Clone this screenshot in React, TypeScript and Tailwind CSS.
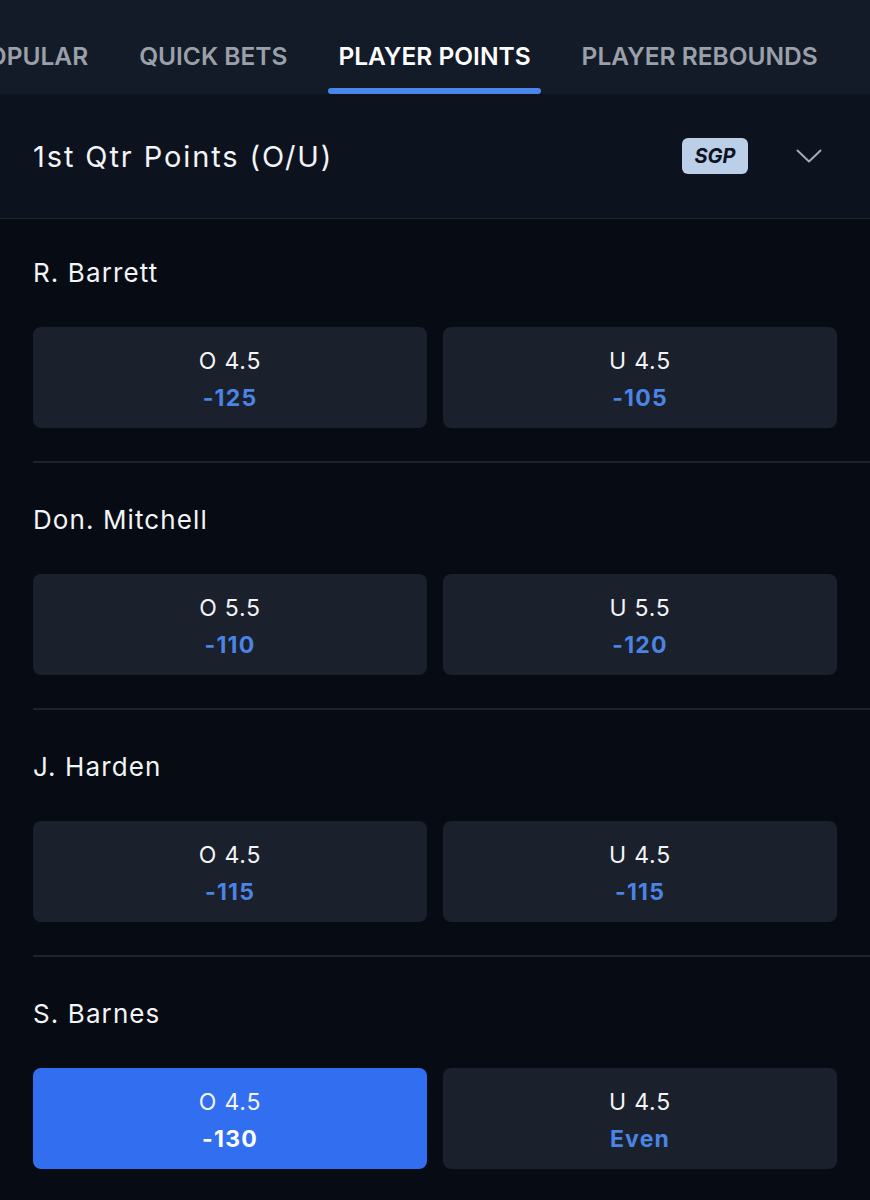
import React from "react";

type Sel = { label: string; odds: string; selected?: boolean };
type Player = { name: string; over: Sel; under: Sel };

const players: Player[] = [
  { name: "R. Barrett", over: { label: "O 4.5", odds: "-125" }, under: { label: "U 4.5", odds: "-105" } },
  { name: "Don. Mitchell", over: { label: "O 5.5", odds: "-110" }, under: { label: "U 5.5", odds: "-120" } },
  { name: "J. Harden", over: { label: "O 4.5", odds: "-115" }, under: { label: "U 4.5", odds: "-115" } },
  { name: "S. Barnes", over: { label: "O 4.5", odds: "-130", selected: true }, under: { label: "U 4.5", odds: "Even" } },
];

function OddsButton({ s }: { s: Sel }) {
  return (
    <div
      className={
        s.selected
          ? "flex h-[101px] flex-1 flex-col items-center justify-center rounded-[8px] bg-[#326ff0]"
          : "flex h-[101px] flex-1 flex-col items-center justify-center rounded-[8px] bg-[#1a202c]"
      }
    >
      <div className="pt-[4px] text-[23px] leading-[36px] tracking-[0.8px] text-[#f3f4f6]">{s.label}</div>
      <div
        className={
          s.selected
            ? "pt-[1px] text-[23px] font-bold leading-[36px] tracking-[1.2px] text-white"
            : "pt-[1px] text-[23px] font-bold leading-[36px] tracking-[1.2px] text-[#4a84e4]"
        }
      >
        {s.odds}
      </div>
    </div>
  );
}

export default function App() {
  const tabs = ["POPULAR", "QUICK BETS", "PLAYER POINTS", "PLAYER REBOUNDS"];
  return (
    <div className="min-h-[1200px] w-[870px] overflow-hidden bg-[#060b14]" style={{ fontFamily: "Inter, 'Noto Sans', sans-serif" }}>
      {/* Tabs */}
      <div className="h-[94px] overflow-hidden bg-[#141b28]">
        <div className="-ml-[38px] flex h-full gap-[31px] whitespace-nowrap">
          {tabs.map((t) => {
            const active = t === "PLAYER POINTS";
            return (
              <div key={t} className="flex h-full flex-col items-center">
                <div
                  className={
                    active
                      ? "flex flex-1 items-center px-[10px] pt-[24px] text-[24.5px] font-semibold text-white"
                      : "flex flex-1 items-center px-[10px] pt-[24px] text-[24.5px] font-semibold text-[#9aa0aa]"
                  }
                >
                  {t}
                </div>
                <div className={active ? "h-[6px] w-full rounded-full bg-[#4a86ea]" : "h-[6px] w-full"} />
              </div>
            );
          })}
        </div>
      </div>

      {/* Header */}
      <div className="flex h-[125px] items-center border-b border-[#1c2230] bg-[#0d131e] pl-[33px] pr-[48px]">
        <div className="flex-1 pt-[2px] text-[29px] tracking-[1.9px] text-[#f3f4f6]">1st Qtr Points (O/U)</div>
        <div className="flex h-[36px] w-[66px] items-center justify-center rounded-[6px] bg-[#bccfe9] text-[20px] font-bold italic text-[#0d131e]">
          SGP
        </div>
        <svg className="ml-[48px]" width="26" height="14" viewBox="0 0 26 14" fill="none">
          <path d="M1.5 1.5 L13 12.5 L24.5 1.5" stroke="#a3aab5" strokeWidth="2" strokeLinecap="round" strokeLinejoin="round" />
        </svg>
      </div>

      {/* Players */}
      {players.map((p, i) => (
        <div key={p.name} className="pl-[33px]">
          <div className={i === 0 ? "pt-[38px]" : "pt-[41px]"}>
            <div className="text-[26px] leading-[32px] tracking-[1.1px] text-[#f3f4f6]">{p.name}</div>
            <div className="mt-[38px] flex gap-[16px] pr-[33px]">
              <OddsButton s={p.over} />
              <OddsButton s={p.under} />
            </div>
          </div>
          {i < players.length - 1 && <div className="mt-[33px] h-[2px] bg-[#1b2230]" />}
        </div>
      ))}
    </div>
  );
}
